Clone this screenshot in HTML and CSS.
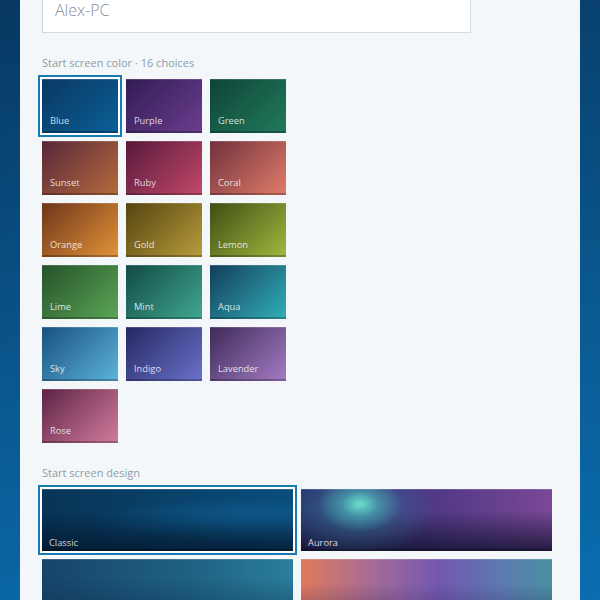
FILE: index.html
```html
<!DOCTYPE html>
<html>
<head>
<meta charset="utf-8">
<link rel="stylesheet" href="styles.css">
</head>
<body>
<div class="panel">
  <div class="name-box">Alex-PC</div>
  <div class="label label-first">Start screen color · 16 choices</div>
  <div class="colors">
    <div class="tile selected t-blue"><span>Blue</span></div>
    <div class="tile t-purple"><span>Purple</span></div>
    <div class="tile t-green"><span>Green</span></div>
    <div class="tile t-sunset"><span>Sunset</span></div>
    <div class="tile t-ruby"><span>Ruby</span></div>
    <div class="tile t-coral"><span>Coral</span></div>
    <div class="tile t-orange"><span>Orange</span></div>
    <div class="tile t-gold"><span>Gold</span></div>
    <div class="tile t-lemon"><span>Lemon</span></div>
    <div class="tile t-lime"><span>Lime</span></div>
    <div class="tile t-mint"><span>Mint</span></div>
    <div class="tile t-aqua"><span>Aqua</span></div>
    <div class="tile t-sky"><span>Sky</span></div>
    <div class="tile t-indigo"><span>Indigo</span></div>
    <div class="tile t-lavender"><span>Lavender</span></div>
    <div class="tile t-rose"><span>Rose</span></div>
  </div>
  <div class="label label-design">Start screen design</div>
  <div class="designs">
    <div class="design selected d-classic"><span>Classic</span></div>
    <div class="design d-aurora"><span>Aurora</span></div>
    <div class="design d-ocean"></div>
    <div class="design d-sunrise"></div>
  </div>
</div>
</body>
</html>
```
FILE: styles.css
```css
html, body {
  margin: 0;
  padding: 0;
  height: 600px;
  overflow: hidden;
}
body {
  background: linear-gradient(170deg, #073862 0%, #0a5a92 60%, #0a6db0 100%);
  font-family: "Open Sans", "Noto Sans", sans-serif;
  padding: 0 20px;
}
.panel {
  background: #f3f7f9;
  height: 600px;
  padding: 0 22px;
  overflow: hidden;
}
.name-box {
  margin-top: -19px;
  width: 429px;
  height: 52px;
  box-sizing: border-box;
  background: #fff;
  border: 1px solid #d2dbe1;
  padding: 17px 12px 0;
  font-size: 16px;
  font-weight: 300;
  line-height: 22px;
  color: #868f96;
}
.label {
  font-size: 11px;
  line-height: 16px;
  color: #8d9ba4;
}
.label-first {
  margin-top: 22px;
}
.colors {
  margin-top: 8px;
  display: grid;
  grid-template-columns: repeat(3, 76px);
  grid-auto-rows: 54px;
  gap: 8px;
}
.tile, .design {
  position: relative;
  display: flex;
  align-items: flex-end;
  box-shadow: inset 0 -2px 0 rgba(0,0,0,0.25), inset 0 1px 0 rgba(255,255,255,0.15);
}
.tile span, .design span {
  font-size: 9.3px;
  line-height: 10px;
  color: rgba(255,255,255,0.82);
  padding: 0 0 7px 8px;
}
.design span { padding: 0 0 3px 7px; }
.selected {
  outline: 2px solid #1b79b1;
  outline-offset: 2px;
}
.selected::after {
  content: "";
  position: absolute;
  inset: -2px;
  border: 2px solid #fff;
  pointer-events: none;
}
.t-blue { background: linear-gradient(135deg, #0b3862, #0a5f97); }
.t-purple { background: linear-gradient(135deg, #321c55, #6a3e8e); }
.t-green { background: linear-gradient(135deg, #0f4436, #217a5d); }
.t-sunset { background: linear-gradient(135deg, #58283a, #b56a3b); }
.t-ruby { background: linear-gradient(135deg, #561838, #c44a6c); }
.t-coral { background: linear-gradient(135deg, #70323c, #e27c6a); }
.t-orange { background: linear-gradient(135deg, #6e3618, #e3933a); }
.t-gold { background: linear-gradient(135deg, #544410, #b99c3c); }
.t-lemon { background: linear-gradient(135deg, #3e4e14, #a2b83e); }
.t-lime { background: linear-gradient(135deg, #26522a, #5aa656); }
.t-mint { background: linear-gradient(135deg, #124a44, #40a890); }
.t-aqua { background: linear-gradient(135deg, #123e5a, #32afb8); }
.t-sky { background: linear-gradient(135deg, #18507e, #5cb4dc); }
.t-indigo { background: linear-gradient(135deg, #262860, #6a72cc); }
.t-lavender { background: linear-gradient(135deg, #3e2a58, #a47cc4); }
.t-rose { background: linear-gradient(135deg, #5c2444, #d47c9e); }
.label-design {
  margin-top: 22px;
}
.designs {
  margin-top: 8px;
  display: grid;
  grid-template-columns: repeat(2, 251px);
  grid-auto-rows: 62px;
  gap: 8px 8px;
}
.d-classic {
  background:
    linear-gradient(180deg, rgba(0,0,0,0) 35%, rgba(3,20,40,0.75) 100%),
    radial-gradient(ellipse 60% 35% at 80% 50%, rgba(20,110,170,0.5), rgba(20,110,170,0) 100%),
    linear-gradient(90deg, #083456, #0a4e7c);
}
.d-aurora {
  background:
    radial-gradient(ellipse 42px 28px at 59px 15px, rgba(110,230,205,0.95), rgba(80,190,190,0.5) 45%, rgba(60,140,170,0) 100%),
    radial-gradient(ellipse 80px 48px at 55px 20px, rgba(50,150,170,0.55), rgba(50,150,170,0) 100%),
    linear-gradient(180deg, rgba(0,0,0,0) 35%, rgba(20,20,50,0.85) 100%),
    linear-gradient(90deg, #2a2e6a, #4a3682 45%, #7a4896);
}
.d-ocean {
  background:
    linear-gradient(180deg, rgba(0,0,0,0) 30%, rgba(10,40,70,0.5) 100%),
    linear-gradient(90deg, #17446a, #1f6284 60%, #2a7e9c);
}
.d-sunrise {
  background:
    linear-gradient(180deg, rgba(0,0,0,0) 40%, rgba(40,30,80,0.45) 100%),
    linear-gradient(90deg, #e07a5c, #a26a98 30%, #7258b0 55%, #5c7ab0 80%, #4a90a0);
}
```
